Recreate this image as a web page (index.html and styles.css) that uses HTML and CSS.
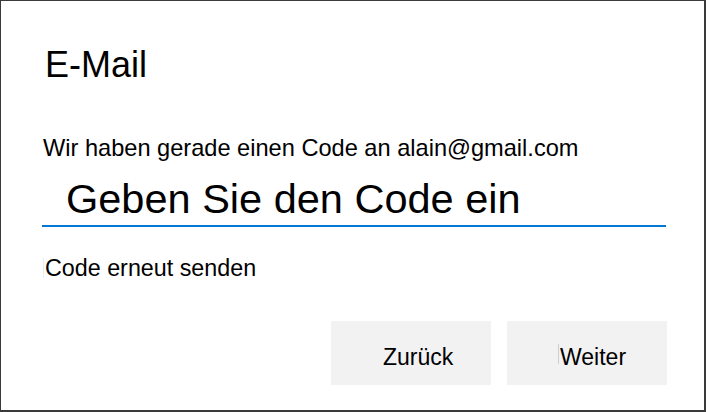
FILE: index.html
```html
<!DOCTYPE html>
<html lang="de">
<head>
<meta charset="utf-8">
<title>E-Mail</title>
<link rel="stylesheet" href="styles.css">
</head>
<body>
<div class="dialog">
  <h1 class="title">E-Mail</h1>
  <p class="info">Wir haben gerade einen Code an alain@gmail.com</p>
  <div class="code-input">Geben Sie den Code ein</div>
  <div class="resend"><span class="caret caret-faint"></span>Code erneut senden</div>
  <div class="actions">
    <div class="btn btn-back">Zurück</div>
    <div class="btn btn-next"><span class="caret"></span>Weiter</div>
  </div>
</div>
</body>
</html>
```
FILE: styles.css
```css
html, body {
  margin: 0;
  padding: 0;
  background: #ffffff;
}
body {
  font-family: "Liberation Sans", Arial, sans-serif;
  color: #000;
}
.dialog {
  box-sizing: border-box;
  width: 706px;
  height: 412px;
  border-style: solid;
  border-color: #3a3a3a;
  border-width: 1px 2px 2px 1px;
  padding: 44px 37px 0 40px;
  display: flex;
  flex-direction: column;
}
.title {
  margin: 0 0 0 4px;
  font-size: 36px;
  font-weight: normal;
  line-height: 40px;
}
.info {
  margin: 50px 0 0 2px;
  font-size: 23.6px;
  line-height: 26px;
}
.code-input {
  margin: 14px 1px 0 1px;
  padding: 0 0 2px 24px;
  font-size: 41.5px;
  line-height: 48px;
  border-bottom: 2px solid #0078d4;
}
.resend {
  margin: 28px 0 0 2px;
  font-size: 23.3px;
  line-height: 26px;
  display: flex;
  align-items: center;
}
.caret {
  display: inline-block;
  width: 1px;
  height: 20px;
  background: #cfcfcf;
  margin-right: 1px;
}
.caret-faint {
  background: #ececec;
  margin-right: 1px;
}
.actions {
  margin-top: 40px;
  display: flex;
  justify-content: flex-end;
  gap: 16px;
}
.btn {
  box-sizing: border-box;
  width: 160px;
  height: 64px;
  background: #f2f2f2;
  font-size: 23px;
  line-height: 26px;
  padding-top: 23px;
  display: flex;
  align-items: flex-start;
}
.btn-back {
  padding-left: 52px;
}
.btn-next {
  padding-left: 51px;
}
.btn-next .caret {
  margin-right: 1px;
}
```
